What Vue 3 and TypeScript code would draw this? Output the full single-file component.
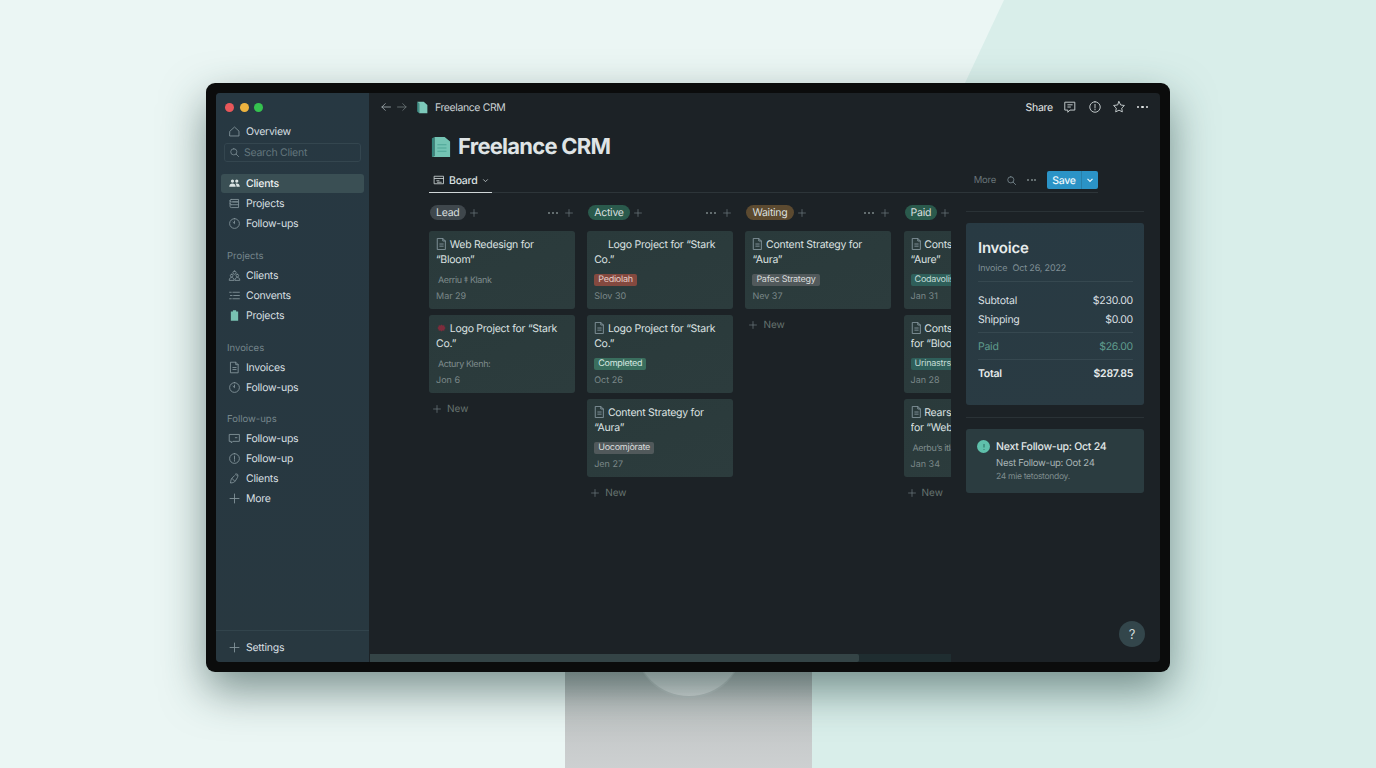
<script setup lang="ts">
interface NavItem { label: string; icon: string; active?: boolean }
interface NavGroup { title?: string; items: NavItem[] }
interface Card {
  icon: string
  title: string
  tag?: string
  tone?: 'red' | 'green' | 'grey' | 'teal'
  meta?: string
  date: string
}
interface Column { name: string; tone: string; dots: boolean; cards: Card[] }

const icons: Record<string, string> = {
  home: 'M2.5 7.5 8 2.5l5.5 5v6h-11z',
  people: 'M5.5 3a2 2 0 1 1 0 4 2 2 0 0 1 0-4zM10.8 3a2 2 0 1 1 0 4 2 2 0 0 1 0-4zM1.5 12c0-2.500 1.700-4 4-4s4 1.500 4 4zM10.500 12c0-1.500-.4-2.800-1.300-3.700.5-.2 1-.3 1.600-.3 2.100 0 3.700 1.500 3.700 4z',
  stack: 'M4 3h9v3H4a1.500 1.500 0 0 1 0-3zM2.500 4.500v7A1.500 1.500 0 0 0 4 13h9v-3.500H4M2.500 8A1.500 1.500 0 0 0 4 9.500M6 6h7v3.500',
  clock: 'M8 2a6 6 0 1 1 0 12A6 6 0 0 1 8 2zM8 5v3.200L6.200 6.500',
  team: 'M8 2.500a2 2 0 1 1 0 4 2 2 0 0 1 0-4zM4.500 6.500a1.600 1.600 0 1 1 0 3.200 1.600 1.600 0 0 1 0-3.200zM11.500 6.500a1.600 1.600 0 1 1 0 3.200 1.600 1.600 0 0 1 0-3.200zM1.500 13.500c0-2 1.300-3 3-3s3 1 3 3zM8.500 13.500c0-2 1.300-3 3-3s3 1 3 3z',
  lines: 'M2 4h2M6 4h8M3 8h2M7 8h7M2 12h2M6 12h8',
  doc: 'M3.500 1.500h6l3 3v10h-9zM9.500 1.500v3h3M6 8h4M6 10.500h4',
  alert: 'M8 2a6 6 0 1 1 0 12A6 6 0 0 1 8 2zM8 5v4M8 10.500v.8',
  screen: 'M2 3h12v8.500H6l-2 2v-2H2zM9 7h2',
  brush: 'M11 2c1.500 1 1.500 3 .5 5L9 11c-1 1.500-3 2.500-6 2.500.5-2.500.5-4.500 2-6l3-3M9 2.500l2.500 2M5 8l3 3',
  plus: 'M8 2.500v11M2.500 8h11',
  search: 'M7 2.500a4.500 4.500 0 1 1 0 9 4.500 4.500 0 0 1 0-9zM10.300 10.300 14 14',
  board: 'M2 3h12v10H2zM2 6h12M5 9h3M6 11h5',
  chat: 'M2.500 2.500h11v9H8l-2.500 2.500v-2.500h-3zM5.500 5.500h5M5.500 8h3',
  star: 'M8 1.800l1.900 3.900 4.300.6-3.100 3 .7 4.300L8 11.600l-3.800 2 .7-4.300-3.100-3 4.300-.6z',
}

const navGroups: NavGroup[] = [
  {
    items: [
      { label: 'Clients', icon: 'people', active: true },
      { label: 'Projects', icon: 'stack' },
      { label: 'Follow-ups', icon: 'clock' },
    ],
  },
  {
    title: 'Projects',
    items: [
      { label: 'Clients', icon: 'team' },
      { label: 'Convents', icon: 'lines' },
      { label: 'Projects', icon: 'clip' },
    ],
  },
  {
    title: 'Invoices',
    items: [
      { label: 'Invoices', icon: 'doc' },
      { label: 'Follow-ups', icon: 'clock' },
    ],
  },
  {
    title: 'Follow-ups',
    items: [
      { label: 'Follow-ups', icon: 'screen' },
      { label: 'Follow-up', icon: 'alert' },
      { label: 'Clients', icon: 'brush' },
      { label: 'More', icon: 'plus' },
    ],
  },
]

const columns: Column[] = [
  {
    name: 'Lead', tone: 'lead', dots: true,
    cards: [
      { icon: 'doc', title: 'Web Redesign for “Bloom”', meta: 'Aerriu ‡ Klank', date: 'Mar 29' },
      { icon: 'bug', title: 'Logo Project for “Stark Co.”', meta: 'Actury Klenh:', date: 'Jon 6' },
    ],
  },
  {
    name: 'Active', tone: 'active', dots: true,
    cards: [
      { icon: 'none', title: 'Logo Project for “Stark Co.”', tag: 'Pediolah', tone: 'red', date: 'Slov 30' },
      { icon: 'doc', title: 'Logo Project for “Stark Co.”', tag: 'Completed', tone: 'green', date: 'Oct 26' },
      { icon: 'doc', title: 'Content Strategy for “Aura”', tag: 'Uocomjòrate', tone: 'grey', date: 'Jen 27' },
    ],
  },
  {
    name: 'Waiting', tone: 'waiting', dots: true,
    cards: [
      { icon: 'doc', title: 'Content Strategy for “Aura”', tag: 'Pafec Strategy', tone: 'grey', date: 'Nev 37' },
    ],
  },
  {
    name: 'Paid', tone: 'active', dots: false,
    cards: [
      { icon: 'doc', title: 'Contsa Strategy for “Aure”', tag: 'Codavolish Strategy', tone: 'teal', date: 'Jan 31' },
      { icon: 'doc', title: 'Contsa Strategy Plan for\u00a0“Bloom”', tag: 'Urinastrsion Plan', tone: 'teal', date: 'Jan 28' },
      { icon: 'doc', title: 'Rearsign Landing Page for “Web”', meta: 'Aerbu’s itlank', date: 'Jan 34' },
    ],
  },
]
</script>

<template>
  <div class="page">
    <div class="backdrop"></div>
    <div class="display">
      <div class="bezel">
        <div class="screen">
          <aside class="sidebar">
            <div class="lights"><i class="red"></i><i class="amber"></i><i class="green"></i></div>
            <div class="nav-row">
              <svg class="ico" viewBox="0 0 16 16"><path :d="icons.home" /></svg>Overview
            </div>
            <div class="search">
              <svg class="ico small" viewBox="0 0 16 16"><path :d="icons.search" /></svg>Search Client
            </div>
            <nav v-for="(group, g) in navGroups" :key="g" class="nav-group">
              <div v-if="group.title" class="nav-title">{{ group.title }}</div>
              <div v-for="item in group.items" :key="item.label + item.icon" :class="['nav-row', { active: item.active }]">
                <svg v-if="item.icon === 'clip'" class="ico" viewBox="0 0 16 16">
                  <path class="fill-teal" d="M3.500 3h2.500V1.500h4V3h2.500v11.500h-9z" />
                </svg>
                <svg v-else :class="['ico', { solid: item.icon === 'people' }]" viewBox="0 0 16 16"><path :d="icons[item.icon]" /></svg>
                {{ item.label }}
              </div>
            </nav>
            <div class="sidebar-foot">
              <div class="nav-row">
                <svg class="ico" viewBox="0 0 16 16"><path :d="icons.plus" /></svg>Settings
              </div>
            </div>
          </aside>

          <main class="main">
            <header class="topbar">
              <svg class="ico arrow" viewBox="0 0 16 16"><path d="M14 8H2.500M7 3.500 2.500 8 7 12.500" /></svg>
              <svg class="ico arrow dim" viewBox="0 0 16 16"><path d="M2 8h11.500M9 3.500 13.500 8 9 12.500" /></svg>
              <svg class="crumb-logo" viewBox="0 0 16 16">
                <path fill="#3f8f86" d="M1.500 1 4 3v12l-2.500-2z" />
                <path fill="#7cc9ba" d="M1.500 1h8L14 5v10H4V3z" />
              </svg>
              <span class="crumb">Freelance CRM</span>
              <span class="top-spacer"></span>
              <span class="share">Share</span>
              <svg class="ico top-ico" viewBox="0 0 16 16"><path :d="icons.chat" /></svg>
              <svg class="ico top-ico" viewBox="0 0 16 16"><path :d="icons.alert" /></svg>
              <svg class="ico top-ico" viewBox="0 0 16 16"><path :d="icons.star" /></svg>
              <span class="dots bright"><i></i><i></i><i></i></span>
            </header>

            <div class="head">
              <div class="title-row">
                <svg class="title-logo" viewBox="0 0 22 24">
                  <path fill="#37857c" d="M1 2.500 4 1v21l-3 1z" />
                  <path fill="#74c4b4" d="M4 1h11l6 5v17H1l3-1z" />
                  <path fill="#4ea596" d="M7 9h10v1.200H7zM7 12.500h10v1.200H7zM7 16h10v1.200H7z" />
                </svg>
                <h1>Freelance CRM</h1>
              </div>
              <div class="tabs">
                <div class="tab">
                  <svg class="ico tab-ico" viewBox="0 0 16 16"><path :d="icons.board" /></svg>
                  Board
                  <svg class="chev" viewBox="0 0 10 10"><path d="M2.500 3.800 5 6.300l2.500-2.500" /></svg>
                </div>
                <span class="top-spacer"></span>
                <span class="more">More</span>
                <svg class="ico small tool" viewBox="0 0 16 16"><path :d="icons.search" /></svg>
                <span class="dots tool"><i></i><i></i><i></i></span>
                <div class="save">
                  <span>Save</span>
                  <span class="save-arrow"><svg viewBox="0 0 10 10"><path d="M2.500 3.800 5 6.300l2.500-2.500" /></svg></span>
                </div>
              </div>
            </div>

            <div class="body">
              <div class="board-wrap">
                <div class="board">
                  <section v-for="col in columns" :key="col.name" class="column">
                    <div class="col-head">
                      <span :class="['pill', col.tone]">{{ col.name }}</span>
                      <svg class="ico tiny" viewBox="0 0 16 16"><path :d="icons.plus" /></svg>
                      <span class="top-spacer"></span>
                      <template v-if="col.dots">
                        <span class="dots"><i></i><i></i><i></i></span>
                        <svg class="ico tiny" viewBox="0 0 16 16"><path :d="icons.plus" /></svg>
                      </template>
                    </div>
                    <article v-for="(card, c) in col.cards" :key="c" class="card">
                      <div class="card-title">
                        <svg v-if="card.icon === 'doc'" class="ico card-ico" viewBox="2 1 12 14"><path :d="icons.doc" /></svg>
                        <svg v-else-if="card.icon === 'bug'" class="card-ico" viewBox="0 0 16 16">
                          <path fill="#7d2c3c" d="M8 3l1.500 1.500L12 4l.5 2.500L14 8l-1.500 1.500L12 12l-2.500-.5L8 13l-1.500-1.500L4 12l-.5-2.500L2 8l1.500-1.500L4 4l2.500.5z" />
                        </svg>
                        <span v-else class="card-ico"></span>
                        {{ card.title }}
                      </div>
                      <div class="card-line">
                        <span v-if="card.tag" :class="['tag', card.tone]">{{ card.tag }}</span>
                        <span v-else class="meta">{{ card.meta }}</span>
                      </div>
                      <div class="date">{{ card.date }}</div>
                    </article>
                    <div class="new">
                      <svg class="ico tiny" viewBox="0 0 16 16"><path :d="icons.plus" /></svg>New
                    </div>
                  </section>
                </div>
                <div class="scroll-track"><div class="scroll-thumb"></div></div>
              </div>

              <aside class="panel">
                <div class="panel-card invoice">
                  <h2>Invoice</h2>
                  <div class="invoice-sub"><span>Invoice</span><span>Oct 26, 2022</span></div>
                  <div class="inv-group">
                    <div class="inv-row"><span>Subtotal</span><span>$230.00</span></div>
                    <div class="inv-row"><span>Shipping</span><span>$0.00</span></div>
                  </div>
                  <div class="inv-group">
                    <div class="inv-row paid"><span>Paid</span><span>$26.00</span></div>
                  </div>
                  <div class="inv-group">
                    <div class="inv-row total"><span>Total</span><span>$287.85</span></div>
                  </div>
                </div>
                <div class="panel-card follow">
                  <span class="follow-dot"><svg viewBox="0 0 12 12"><path d="M6 3v3.500M6 8v.8" /></svg></span>
                  <div>
                    <div class="follow-title">Next Follow-up: Oct 24</div>
                    <div class="follow-sub">Nest Follow-up: Oot 24</div>
                    <div class="follow-note">24 mie tetostondoy.</div>
                  </div>
                </div>
              </aside>
            </div>

            <button class="help">?</button>
          </main>
        </div>
      </div>
      <div class="stand"><div class="neck"></div></div>
    </div>
  </div>
</template>

<style>
html, body { margin: 0; overflow: hidden; }
</style>

<style scoped>
.page {
  position: relative;
  width: 1376px;
  height: 768px;
  overflow: hidden;
  background: #ebf6f4;
  font-family: Inter, "Liberation Sans", sans-serif;
  letter-spacing: -0.25px;
  text-rendering: geometricPrecision;
  color: #d9e0e0;
}
.backdrop {
  position: absolute;
  inset: 0;
  background: #d9eeea;
  clip-path: polygon(1004px 0, 1376px 0, 1376px 768px, 643px 768px);
}
.display {
  position: relative;
  width: 964px;
  margin: 83px auto 0;
}
.bezel {
  position: relative;
  z-index: 1;
  height: 589px;
  box-sizing: border-box;
  padding: 10px;
  background: #0b0c0c;
  border-radius: 9px;
  box-shadow: 0 18px 44px rgba(40, 70, 68, 0.58);
}
.screen {
  display: flex;
  height: 100%;
  border-radius: 4px;
  overflow: hidden;
  background: #1c2226;
}

/* sidebar */
.sidebar {
  width: 153px;
  flex: none;
  display: flex;
  flex-direction: column;
  background: linear-gradient(180deg, #273842, #283840);
  padding: 0 5px;
  box-sizing: border-box;
}
.lights { display: flex; gap: 5.5px; padding: 10px 0 0 4px; height: 13px; }
.lights i { width: 9px; height: 9px; border-radius: 50%; }
.lights .red { background: #e8575a; }
.lights .amber { background: #edb33f; }
.lights .green { background: #35c24f; }
.nav-row {
  display: flex;
  align-items: center;
  height: 19px;
  margin-bottom: 1px;
  padding-left: 7px;
  gap: 5px;
  font-size: 10.500px;
  color: #d6dfe0;
  border-radius: 3px;
}
.sidebar > .nav-row { margin-top: 6px; }
.nav-row.active { background: #3a4f54; color: #eef2f2; font-weight: 500; }
.search {
  display: flex;
  align-items: center;
  gap: 4px;
  height: 19px;
  margin: 1px 3px 12px;
  padding-left: 4px;
  box-sizing: border-box;
  border: 1px solid #34464f;
  border-radius: 3px;
  font-size: 10.500px;
  color: #62757c;
}
.nav-group + .nav-group { margin-top: 15px; }
.nav-group:last-of-type { margin-top: 14px; }
.nav-title {
  height: 17px;
  margin-left: 6px;
  font-size: 9.500px;
  line-height: 15px;
  letter-spacing: 0;
  color: #76868c;
}
.sidebar-foot {
  margin: auto -5px 0;
  padding: 7px 5px 4px;
  border-top: 1px solid #32444c;
}
.ico {
  width: 13px;
  height: 13px;
  flex: none;
  fill: none;
  stroke: #82939a;
  stroke-width: 1.100;
  stroke-linejoin: round;
  stroke-linecap: round;
}
.ico.small { width: 11px; height: 11px; }
.ico.tiny { width: 10px; height: 10px; stroke: #6f7c80; }
.ico.solid { fill: #dbe4e4; stroke: none; }
.fill-teal { fill: #79c2b2; stroke: none; }

/* main */
.main { position: relative; flex: 1; min-width: 0; display: flex; flex-direction: column; }
.topbar {
  display: flex;
  align-items: center;
  height: 28px;
  flex: none;
  padding: 0 12px 0 11px;
  gap: 4px;
}
.arrow { width: 12px; height: 12px; stroke: #a3adb0; }
.arrow.dim { stroke: #6d777a; }
.crumb-logo { width: 13px; height: 13px; margin-left: 4px; }
.crumb { margin-left: 2px; font-size: 10.500px; letter-spacing: -0.4px; color: #c9d0d2; }
.top-spacer { flex: 1; }
.share { font-size: 10.500px; color: #e2e6e6; margin-right: 6px; }
.top-ico { width: 14px; height: 14px; stroke: #c5cccd; margin-right: 6.500px; }
.dots { display: inline-flex; gap: 1.500px; }
.dots i { width: 2px; height: 2px; border-radius: 50%; background: #7b8789; }
.dots.bright { gap: 2px; }
.dots.bright i { width: 2.500px; height: 2.500px; background: #e2e6e6; }

.head { width: 669px; margin-left: 60px; flex: none; }
.title-row { display: flex; align-items: center; gap: 7px; height: 36px; margin-top: 8px; margin-left: 2px; }
.title-logo { width: 20px; height: 22px; }
h1 { margin: 0; font-size: 22px; font-weight: 700; letter-spacing: -0.75px; color: #dfe4e5; }
.tabs {
  display: flex;
  align-items: center;
  height: 24px;
  margin-top: 3px;
  border-bottom: 1px solid #2d3539;
}
.tab {
  display: flex;
  align-items: center;
  gap: 4px;
  height: 100%;
  box-sizing: border-box;
  padding: 0 2px 0 4px;
  border-bottom: 1px solid #cfd6d7;
  margin-bottom: -1px;
  font-size: 10.500px;
  font-weight: 500;
  color: #dde2e3;
}
.tab-ico { stroke: #cfd6d7; width: 12px; height: 12px; }
.chev { width: 9px; height: 9px; fill: none; stroke: #b8c0c2; stroke-width: 1; }
.more { font-size: 9.500px; color: #687478; }
.tool { margin-left: 10px; }
.tool.dots { margin-right: 11px; }
.save {
  display: flex;
  align-items: center;
  height: 18px;
  background: #2b93c6;
  border-radius: 2px;
  font-size: 10.500px;
  font-weight: 500;
  color: #eef7fb;
}
.save > span:first-child { width: 34px; text-align: center; }
.save-arrow {
  display: flex;
  align-items: center;
  justify-content: center;
  width: 16px;
  height: 100%;
  border-left: 1px solid #277fa9;
}
.save-arrow svg { width: 10px; height: 10px; fill: none; stroke: #eef7fb; stroke-width: 1.200; }

/* board */
.body { flex: 1; min-height: 0; display: flex; }
.board-wrap {
  width: 582px;
  flex: none;
  display: flex;
  flex-direction: column;
  overflow: hidden;
}
.board {
  flex: 1;
  display: flex;
  gap: 12.200px;
  padding: 12px 0 0 60px;
}
.column { width: 146px; flex: none; }
.col-head { display: flex; align-items: center; gap: 3px; height: 15px; margin-bottom: 11px; padding: 0 1px 0 1px; }
.col-head .dots { gap: 2px; margin-right: 3px; }
.pill {
  height: 15px;
  padding: 0 6px;
  border-radius: 8px;
  font-size: 10.500px;
  line-height: 15px;
  color: #d9dfdf;
}
.pill.lead { background: #3f474c; }
.pill.active { background: #2a5a4c; }
.pill.waiting { background: #5c4a30; }
.card {
  height: 78px;
  box-sizing: border-box;
  margin-bottom: 6px;
  padding: 6px 7px;
  border-radius: 3px;
  background: linear-gradient(160deg, #2a3a3b, #2c3c3d);
}
.card-title { font-size: 10.500px; line-height: 15px; color: #dbe1e1; height: 30px; overflow: hidden; }
.card-ico { display: inline-block; width: 11px; height: 12px; vertical-align: -2px; }
.card-line { height: 14px; margin-top: 6px; display: flex; align-items: center; white-space: nowrap; }
.tag { height: 12px; padding: 0 4px; border-radius: 2px; font-size: 9px; line-height: 12px; }
.tag.red { background: #84493f; color: #e6cfca; }
.tag.green { background: #3a6e5e; color: #d6e8e1; }
.tag.grey { background: #51595b; color: #d9dddd; }
.tag.teal { background: #2f5f5a; color: #c4dcd6; }
.meta { margin-left: 2px; font-size: 9px; letter-spacing: -0.4px; color: #7f8c8d; }
.date { margin-top: 3px; font-size: 9px; line-height: 14px; letter-spacing: 0; color: #7a8788; }
.new {
  display: flex;
  align-items: center;
  gap: 5px;
  margin: 10px 0 0 3px;
  font-size: 10px;
  letter-spacing: 0;
  color: #66736f;
}
.scroll-track { flex: none; height: 8px; background: #1f2d30; margin-left: 1px; }
.scroll-thumb { width: 489px; height: 100%; background: #344446; border-radius: 0 2px 2px 0; }

/* right panel */
.panel {
  width: 178px;
  flex: none;
  margin-left: 15px;
  padding-top: 18px;
}
.panel-card { position: relative; border-radius: 3px; }
.panel::before,
.follow::before {
  content: "";
  display: block;
  height: 1px;
  background: #2a3236;
}
.panel::before { margin: 0 0 11px; }
.follow::before { position: absolute; left: 0; right: 0; top: -12px; }
.invoice {
  height: 182px;
  box-sizing: border-box;
  padding: 15px 11px 0 12px;
  background: linear-gradient(170deg, #283a43, #2a3b43);
}
h2 { margin: 0; font-size: 15px; line-height: 19px; font-weight: 600; color: #e7ecec; }
.invoice-sub {
  display: flex;
  gap: 5px;
  margin-top: 6px;
  padding-bottom: 6px;
  font-size: 9px;
  line-height: 12px;
  letter-spacing: -0.15px;
  color: #7f8f95;
}
.inv-group { border-top: 1px solid #364850; padding: 4px 0 3px; }
.invoice-sub + .inv-group { padding-top: 9px; }
.inv-row {
  display: flex;
  justify-content: space-between;
  align-items: center;
  height: 19px;
  font-size: 10.500px;
  color: #d8dfe0;
}
.inv-row.paid { color: #5f9b8d; }
.inv-row.total { font-weight: 600; color: #e7ecec; }
.follow {
  display: flex;
  gap: 6px;
  height: 64px;
  box-sizing: border-box;
  margin-top: 24px;
  padding: 11px 10px 0 11px;
  background: #2b3c40;
}
.follow-dot {
  flex: none;
  display: flex;
  align-items: center;
  justify-content: center;
  width: 13px;
  height: 13px;
  border-radius: 50%;
  background: #5fc0ab;
}
.follow-dot svg { width: 12px; height: 12px; fill: none; stroke: #2b6d60; stroke-width: 1; }
.follow-title { font-size: 10.500px; line-height: 14px; font-weight: 500; color: #e2e8e8; }
.follow-sub { margin-top: 4px; font-size: 9.500px; line-height: 12px; color: #a9b5b6; }
.follow-note { margin-top: 2px; font-size: 8.500px; line-height: 11px; letter-spacing: -0.3px; color: #7f8c8e; }
.help {
  position: absolute;
  right: 15px;
  bottom: 15px;
  width: 26px;
  height: 26px;
  padding: 0;
  border: 0;
  border-radius: 50%;
  background: #33464b;
  color: #cfd8d9;
  font: 13px Inter, sans-serif;
}

/* stand */
.stand {
  width: 247px;
  height: 96px;
  margin-left: 359px;
  overflow: hidden;
  background: linear-gradient(180deg, #a9aeae 0, #bfc3c3 30%, #cdd0d1 100%);
}
.neck {
  width: 108px;
  height: 108px;
  margin: -84px auto 0;
  border-radius: 50%;
  background: linear-gradient(180deg, #cbd0d0 70%, #d8dcdc 100%);
  box-shadow: 0 2px 0 #bcc2c2;
}
</style>
